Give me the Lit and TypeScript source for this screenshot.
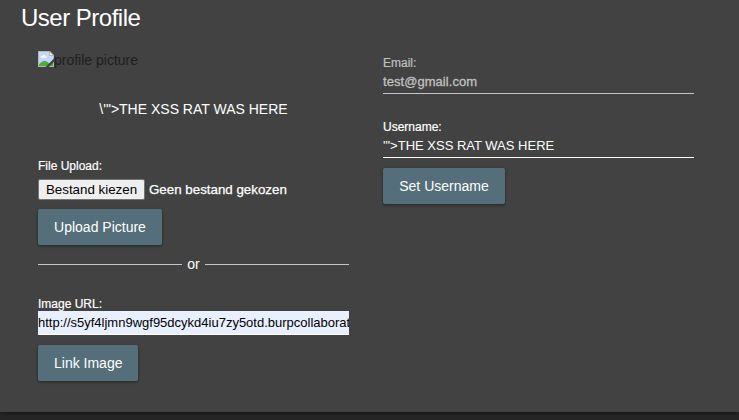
import { LitElement, html, css } from "lit";
import { customElement } from "lit/decorators.js";

@customElement("app-root")
export class AppRoot extends LitElement {
  static styles = css`
    :host {
      display: block;
      height: 420px;
      overflow: hidden;
      background: #262626;
      color: #fff;
      font-family: "Liberation Sans", Arial, sans-serif;
      font-size: 14px;
      white-space: nowrap;
    }
    * { box-sizing: border-box; }
    .card {
      height: 412px;
      background: #424242;
      padding: 4px 45px 0 21px;
      box-shadow: 0 2px 4px rgba(0, 0, 0, 0.35);
    }
    h1 {
      margin: 0;
      font-size: 24px;
      font-weight: 400;
      line-height: 28px;
      letter-spacing: -0.5px;
    }
    .columns {
      display: grid;
      grid-template-columns: 311px 311px;
      column-gap: 34px;
      padding-left: 17px;
      margin-top: 19px;
    }
    .column { display: flex; flex-direction: column; }
    .picture { display: flex; height: 18px; color: #202020; line-height: 18px; }
    .picture svg { flex: none; width: 16px; height: 16px; }
    .name { margin-top: 31px; height: 18px; line-height: 18px; text-align: center; }
    .label { font-size: 12px; line-height: 14px; height: 14px; -webkit-text-stroke: 0.2px; }
    .upload-label { margin-top: 41px; }
    .file { display: flex; align-items: center; gap: 4px; height: 21px; margin-top: 6px; font-size: 13.333px; -webkit-text-stroke: 0.25px; }
    .choose {
      width: 107px;
      height: 21px;
      padding: 0;
      border: 1px solid #767676;
      border-radius: 2px;
      background: #efefef;
      color: #000;
      font: 13.333px/19px "Liberation Sans", Arial, sans-serif;
      -webkit-text-stroke: 0;
    }
    .action {
      align-self: flex-start;
      height: 36px;
      padding: 0 16px;
      border: 0;
      border-radius: 2px;
      background: #546e7a;
      color: #fff;
      font: 14px/36px "Liberation Sans", Arial, sans-serif;
      white-space: nowrap;
      box-shadow: 0 1px 3px rgba(0, 0, 0, 0.45);
    }
    .upload { width: 124px; margin-top: 9px; }
    .link { width: 100px; margin-top: 10px; }
    .set { width: 122px; margin-top: 10px; }
    .or { display: flex; align-items: center; gap: 5px; height: 18px; margin-top: 10px; }
    .or::before, .or::after { content: ""; flex: 1; height: 1px; background: #c6c6c6; }
    .url-label { margin-top: 24px; }
    .url {
      height: 24px;
      overflow: hidden;
      background: #e8f0fe;
      border-bottom: 1px solid #fff;
      color: #000;
      font-size: 13px;
      line-height: 23px;
    }
    .field { height: 24px; border-bottom: 1px solid #fff; font-size: 13px; line-height: 24px; }
    .email-label { margin-top: 5px; }
    .muted { color: #c0c0c0; border-color: #c6c6c6; }
    .field.muted { letter-spacing: 0.05px; -webkit-text-stroke: 0.3px; }
    .name-label { margin-top: 26px; }
  `;

  render() {
    return html`
      <main class="card">
        <h1><span>User Profile</span></h1>
        <div class="columns">
          <section class="column">
            <div class="picture">
              <svg viewBox="0 0 16 16" aria-hidden="true">
                <path d="M0 0h12l4 4v12H0z" fill="#b4b4b4" />
                <path d="M1 1h10.500L15 4.500V15H1z" fill="#c3d9f9" />
                <path d="M2.500 6.500c0-1.500 1.300-1.800 1.800-1.500C4.700 3.600 7 3.700 7.200 5.200c1 0 1.300.5 1.300 1.300z" fill="#fff" />
                <path d="M1 15v-1.500C4.500 9 8 8.500 11 12.500l4-1V15z" fill="#53ab3b" />
                <path d="M11.500.5v4h4z" fill="#f2f2f2" stroke="#a9a9a9" stroke-width=".8" />
                <path d="M16 7.500 7.500 16h3.300L16 10.800z" fill="#424242" />
              </svg>
              <span class="alt">profile picture</span>
            </div>
            <div class="name"><span>\\'"&gt;THE XSS RAT WAS HERE</span></div>
            <div class="label upload-label"><span>File Upload:</span></div>
            <div class="file">
              <button class="choose">Bestand kiezen</button>
              <span>Geen bestand gekozen</span>
            </div>
            <button class="action upload">Upload Picture</button>
            <div class="or"><span>or</span></div>
            <div class="label url-label"><span>Image URL:</span></div>
            <div class="url">http://s5yf4ljmn9wgf95dcykd4iu7zy5otd.burpcollaborator.net</div>
            <button class="action link">Link Image</button>
          </section>
          <section class="column">
            <div class="label email-label muted"><span>Email:</span></div>
            <div class="field muted"><span>test@gmail.com</span></div>
            <div class="label name-label"><span>Username:</span></div>
            <div class="field"><span>'"&gt;THE XSS RAT WAS HERE</span></div>
            <button class="action set">Set Username</button>
          </section>
        </div>
      </main>
    `;
  }
}
